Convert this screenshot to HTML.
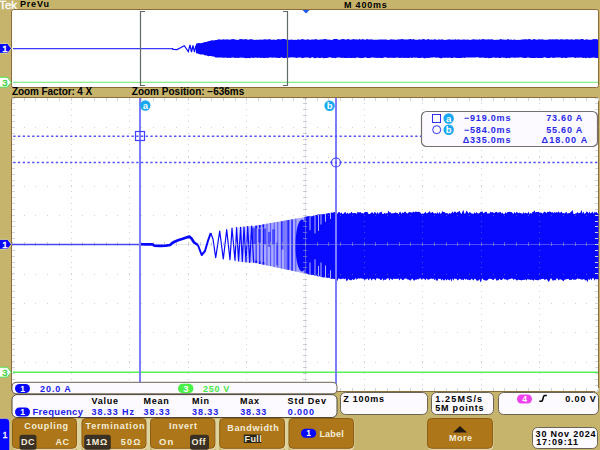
<!DOCTYPE html><html><head><meta charset="utf-8"><style>*{margin:0;padding:0}body{width:600px;height:450px;overflow:hidden;background:#c6b46c}svg{position:absolute;left:0;top:0;display:block}text{font-family:'Liberation Sans', sans-serif}</style></head><body>
<svg width="600" height="450" viewBox="0 0 600 450">
<rect width="600" height="450" fill="#c6b46c"/>
<text x="-0.8" y="8.8" font-size="11.5" fill="#fff" letter-spacing="0" font-weight="normal" text-anchor="start" stroke="#fff" stroke-width="0.35">Tek</text>
<text x="20" y="7.4" font-size="9" fill="#000" letter-spacing="0.8" font-weight="bold" text-anchor="start" >PreVu</text>
<text x="344" y="7.5" font-size="9" fill="#000" letter-spacing="0.8" font-weight="bold" text-anchor="start" >M 400ms</text>
<rect x="11.5" y="9.5" width="587" height="78" rx="2" fill="#fff" stroke="#8c6c3c" stroke-width="1"/>
<line x1="13" y1="82.3" x2="598" y2="82.3" stroke="#68e868" stroke-width="1.1"/>
<line x1="13" y1="48.6" x2="173" y2="48.6" stroke="#3a3af8" stroke-width="1.1"/>
<path d="M172 48.6 L173.5 49.4 L177 49.6 L181 47.5 L184.3 45.7 L188.3 51.6 L190 45 L191.5 52 L193 45.5 L194.5 52 L196 45.5" fill="none" stroke="#0808ff" stroke-width="1.2"/>
<path d="M196 43.8 L197.5 43.2 L199 43 L200.5 43.2 L202 42.9 L203.5 42.6 L205 42 L206.5 42 L208 41.2 L209.5 41 L211 40.4 L212.5 40.2 L214 40.5 L215.5 40.1 L217 39.9 L218.5 39.3 L220 39.4 L221.5 39.8 L223 39.3 L224.5 39.6 L226 39.5 L227.5 39.2 L229 39.7 L230.5 39.4 L232 39.2 L233.5 39 L235 39.5 L236.5 39.8 L238 39.9 L239.5 39.2 L241 39.1 L242.5 39.3 L244 39.4 L245.5 39.1 L247 39.5 L248.5 39.8 L250 39.3 L251.5 39.2 L253 39.6 L254.5 39.9 L256 39.7 L257.5 39.8 L259 39.8 L260.5 39.5 L262 39.8 L263.5 39.4 L265 39.2 L266.5 39.6 L268 39.6 L269.5 39 L271 39.7 L272.5 39.7 L274 39.4 L275.5 39.9 L277 39.6 L278.5 39 L280 39.4 L281.5 39.3 L283 39.1 L284.5 39.1 L286 39.5 L287.5 39.8 L289 39.8 L290.5 39.7 L292 39.6 L293.5 39.9 L295 39.8 L296.5 39.9 L298 39.3 L299.5 39.7 L301 39.6 L302.5 39.1 L304 39.5 L305.5 39.8 L307 39.6 L308.5 39.2 L310 39.9 L311.5 39.4 L313 39.4 L314.5 39.4 L316 39.1 L317.5 39.7 L319 39.7 L320.5 39.4 L322 39.6 L323.5 39.2 L325 39.1 L326.5 39.2 L328 39.7 L329.5 39.6 L331 39.9 L332.5 39.7 L334 39 L335.5 39.1 L337 39 L338.5 39.7 L340 39.7 L341.5 39.3 L343 39.1 L344.5 39.3 L346 39.8 L347.5 39.1 L349 39.2 L350.5 39.7 L352 39.6 L353.5 39 L355 39.5 L356.5 39.2 L358 39.8 L359.5 39.1 L361 39.8 L362.5 39 L364 39.6 L365.5 39.8 L367 39 L368.5 39.4 L370 39.5 L371.5 39.2 L373 39.7 L374.5 39.7 L376 39.7 L377.5 39.8 L379 39.6 L380.5 39.4 L382 39.5 L383.5 39.4 L385 39.4 L386.5 39.5 L388 39.9 L389.5 39.7 L391 39.2 L392.5 39.6 L394 39.4 L395.5 39.8 L397 39.7 L398.5 39.2 L400 39.4 L401.5 39.1 L403 39.3 L404.5 39.4 L406 39.5 L407.5 39.5 L409 39.3 L410.5 39.1 L412 39.4 L413.5 39.1 L415 39.8 L416.5 39.8 L418 39.8 L419.5 39.2 L421 39.8 L422.5 39.3 L424 39.1 L425.5 39.7 L427 39.5 L428.5 39 L430 39.8 L431.5 39.4 L433 39.7 L434.5 39.3 L436 39.4 L437.5 39.9 L439 39.3 L440.5 39.8 L442 39.2 L443.5 39.8 L445 39.9 L446.5 39.7 L448 39.5 L449.5 39.2 L451 39.8 L452.5 39.4 L454 39.8 L455.5 39.3 L457 39.8 L458.5 39.3 L460 39.8 L461.5 39.8 L463 39.5 L464.5 39.4 L466 39.7 L467.5 39.4 L469 39.8 L470.5 39.9 L472 39.6 L473.5 39.2 L475 39.4 L476.5 39.6 L478 39.7 L479.5 39.2 L481 39.7 L482.5 39.1 L484 39.2 L485.5 39.5 L487 39.5 L488.5 39.3 L490 39.6 L491.5 39.3 L493 39.5 L494.5 39.9 L496 39.8 L497.5 39.7 L499 39.8 L500.5 39.1 L502 39.6 L503.5 39.6 L505 39.8 L506.5 39.7 L508 39 L509.5 39.7 L511 39.6 L512.5 39.9 L514 39.5 L515.5 39.7 L517 39.9 L518.5 39.8 L520 39.9 L521.5 39.6 L523 39.4 L524.5 39.2 L526 39.3 L527.5 39.5 L529 39 L530.5 39.2 L532 39.9 L533.5 39.1 L535 39.2 L536.5 39.8 L538 39.4 L539.5 39.2 L541 39.4 L542.5 39.3 L544 39.7 L545.5 39.8 L547 39.8 L548.5 39.4 L550 39.3 L551.5 39.5 L553 39.2 L554.5 39.4 L556 39.3 L557.5 39.2 L559 39.8 L560.5 39.2 L562 39.2 L563.5 39.5 L565 39.5 L566.5 39.2 L568 39.3 L569.5 39.8 L571 39.2 L572.5 39.4 L574 39.8 L575.5 39.3 L577 39.3 L578.5 39.4 L580 39.5 L581.5 39.1 L583 39 L584.5 39.9 L586 39.2 L587.5 39.5 L589 39.7 L590.5 39.7 L592 39.8 L593.5 39 L595 39.2 L596.5 39.1 L598 39.7 L598 58.1 L596.5 57.9 L595 57.8 L593.5 57.4 L592 57.8 L590.5 57.8 L589 58.2 L587.5 57.5 L586 58.2 L584.5 57.7 L583 58.1 L581.5 57.5 L580 57.4 L578.5 57.7 L577 57.6 L575.5 57.9 L574 57.5 L572.5 57.3 L571 57.6 L569.5 57.5 L568 57.4 L566.5 57.9 L565 57.9 L563.5 57.6 L562 58.2 L560.5 57.5 L559 57.5 L557.5 57.5 L556 57.4 L554.5 57.8 L553 58 L551.5 57.3 L550 57.9 L548.5 57.9 L547 58.1 L545.5 57.6 L544 57.3 L542.5 57.9 L541 58.1 L539.5 58 L538 58.1 L536.5 57.8 L535 58 L533.5 57.9 L532 58.1 L530.5 57.9 L529 57.4 L527.5 57.6 L526 58.1 L524.5 57.9 L523 57.8 L521.5 57.5 L520 57.3 L518.5 57.7 L517 57.5 L515.5 57.8 L514 57.8 L512.5 57.6 L511 57.6 L509.5 58.2 L508 57.8 L506.5 58.2 L505 57.7 L503.5 57.7 L502 57.5 L500.5 57.9 L499 58.1 L497.5 57.4 L496 58 L494.5 57.4 L493 57.6 L491.5 57.9 L490 58 L488.5 58.2 L487 57.8 L485.5 58.1 L484 57.7 L482.5 57.4 L481 57.7 L479.5 57.8 L478 57.3 L476.5 57.3 L475 57.5 L473.5 57.6 L472 57.6 L470.5 57.5 L469 57.4 L467.5 57.5 L466 57.4 L464.5 58.1 L463 57.6 L461.5 58.1 L460 58.1 L458.5 58 L457 58.1 L455.5 57.7 L454 57.4 L452.5 57.9 L451 58.1 L449.5 57.5 L448 58.1 L446.5 57.4 L445 58 L443.5 57.5 L442 58.2 L440.5 58.2 L439 57.8 L437.5 57.6 L436 57.7 L434.5 57.3 L433 57.6 L431.5 57.6 L430 57.7 L428.5 58 L427 57.7 L425.5 58.2 L424 58.2 L422.5 57.4 L421 57.9 L419.5 58.1 L418 57.9 L416.5 57.5 L415 57.7 L413.5 57.4 L412 58.1 L410.5 57.5 L409 58.1 L407.5 58.1 L406 57.8 L404.5 57.9 L403 57.8 L401.5 57.7 L400 58 L398.5 57.8 L397 57.5 L395.5 57.8 L394 58 L392.5 57.8 L391 57.8 L389.5 57.7 L388 58 L386.5 57.5 L385 57.3 L383.5 57.8 L382 58.1 L380.5 58.1 L379 57.7 L377.5 58.1 L376 57.7 L374.5 57.8 L373 57.6 L371.5 57.5 L370 58.1 L368.5 58.1 L367 57.9 L365.5 57.3 L364 57.8 L362.5 57.9 L361 58 L359.5 58 L358 57.4 L356.5 57.5 L355 58.2 L353.5 57.7 L352 58 L350.5 58 L349 57.7 L347.5 58 L346 57.9 L344.5 58 L343 57.7 L341.5 58.1 L340 57.5 L338.5 57.5 L337 57.6 L335.5 58.2 L334 57.7 L332.5 57.9 L331 57.6 L329.5 57.3 L328 57.8 L326.5 58 L325 58 L323.5 58.2 L322 57.5 L320.5 58 L319 58 L317.5 57.6 L316 57.9 L314.5 58.2 L313 57.3 L311.5 57.4 L310 58.2 L308.5 57.4 L307 57.5 L305.5 57.4 L304 57.7 L302.5 58.2 L301 57.4 L299.5 57.6 L298 57.4 L296.5 58.1 L295 57.6 L293.5 57.4 L292 57.3 L290.5 57.4 L289 57.4 L287.5 57.9 L286 57.7 L284.5 58 L283 58 L281.5 57.3 L280 57.9 L278.5 57.9 L277 57.8 L275.5 57.7 L274 57.5 L272.5 57.7 L271 57.5 L269.5 57.4 L268 58.1 L266.5 57.7 L265 58.1 L263.5 58.1 L262 57.7 L260.5 58.1 L259 57.5 L257.5 58 L256 57.4 L254.5 57.7 L253 57.9 L251.5 57.6 L250 58.2 L248.5 57.9 L247 57.9 L245.5 58.2 L244 57.7 L242.5 57.8 L241 57.6 L239.5 57.8 L238 57.9 L236.5 57.7 L235 58 L233.5 57.4 L232 57.6 L230.5 58.1 L229 57.8 L227.5 57.9 L226 57.6 L224.5 57.8 L223 57.7 L221.5 57.5 L220 57.4 L218.5 57.6 L217 57.6 L215.5 57.6 L214 56.6 L212.5 56.5 L211 56 L209.5 56 L208 56.2 L206.5 55.3 L205 55.6 L203.5 54.6 L202 54.6 L200.5 54.4 L199 54 L197.5 53.5 L196 53.2Z" fill="#0808ff"/>
<path d="M145 11.5H140.5V85.5H145" fill="none" stroke="#606a6a" stroke-width="1.2"/>
<path d="M283 11.5H287.5V85.5H283" fill="none" stroke="#606a6a" stroke-width="1.2"/>
<path d="M302.5 10H309.5L306 13.5Z" fill="#1a5af0"/>
<path d="M-2 43.4 H7.5 L11.5 48.4 L7.5 53.4 H-2Z" fill="#0606fc" stroke="#e0d890" stroke-width="1"/>
<text x="4.8" y="51.8" font-size="9.5" fill="#fff" letter-spacing="0" font-weight="normal" text-anchor="middle" stroke="#fff" stroke-width="0.4">1</text>
<path d="M-2 77.2 H7.2 L11.2 82.2 L7.2 87.2 H-2Z" fill="#fff" stroke="#50e050" stroke-width="1"/>
<text x="4.8" y="85.6" font-size="9.5" fill="#40d040" letter-spacing="0" font-weight="normal" text-anchor="middle" stroke="#40d040" stroke-width="0.4">3</text>
<text x="12" y="95.2" font-size="10" fill="#000" letter-spacing="-0.1" font-weight="bold" text-anchor="start" >Zoom Factor: 4 X</text>
<text x="131.8" y="95.2" font-size="10" fill="#000" letter-spacing="0" font-weight="bold" text-anchor="start" >Zoom Position: &#8722;636ms</text>
<rect x="11.5" y="97.5" width="587" height="294" rx="2" fill="#fff" stroke="#8c6c3c" stroke-width="1"/>
<defs><linearGradient id="lg" x1="232" x2="252" gradientUnits="userSpaceOnUse"><stop offset="0" stop-color="#fff"/><stop offset="1" stop-color="#a8a8ff"/></linearGradient></defs><path d="M232 227.3 L234 227.2 L236 227.1 L238 226.9 L240 226.8 L242 226.7 L244 226.6 L246 226.5 L248 226.3 L250 226.2 L252 226.1 L254 225.9 L256 225.6 L258 225.2 L260 224.9 L262 224.5 L264 224.2 L266 223.8 L268 223.5 L270 223.1 L272 222.8 L274 222.4 L276 222.1 L278 221.7 L280 221.4 L282 221 L284 220.7 L286 220.3 L288 220 L290 219.6 L292 219.3 L294 218.9 L296 218.6 L298 218.2 L300 217.9 L302 217.5 L304 217.2 L306 216.8 L308 216.5 L310 216.2 L312 215.9 L314 215.5 L316 215.2 L318 214.9 L320 214.6 L322 214.3 L324 213.9 L326 213.6 L328 213.3 L330 213 L332 212.6 L334 212.3 L336 212 L336 279.5 L334 279.1 L332 278.7 L330 278.3 L328 278 L326 277.6 L324 277.2 L322 276.8 L320 276.4 L318 276 L316 275.6 L314 275.2 L312 274.9 L310 274.5 L308 274.1 L306 273.7 L304 273.3 L302 272.9 L300 272.4 L298 272 L296 271.6 L294 271.2 L292 270.8 L290 270.3 L288 269.9 L286 269.5 L284 269.1 L282 268.7 L280 268.2 L278 267.8 L276 267.4 L274 267 L272 266.6 L270 266.1 L268 265.7 L266 265.3 L264 264.9 L262 264.4 L260 264 L258 263.6 L256 263.2 L254 262.8 L252 262.6 L250 262.5 L248 262.4 L246 262.2 L244 262.1 L242 262 L240 261.9 L238 261.8 L236 261.6 L234 261.5 L232 261.4Z" fill="url(#lg)"/>
<path d="M210.7 233 L213 239 L215.7 257.7 L219.7 231 L223.3 259 L226.7 229.7 L230 259.7 L232 228 L235 260.3 L236.6 227.7 L238.6 261 L240.6 227.3 L242.3 261.5 L244 227 L246 262 L247.7 226.5 L249.7 262.5 L251.7 226 L253.7 262.7" fill="none" stroke="#0808ff" stroke-width="1.2" stroke-linejoin="round"/>
<path d="M255.6 225.7h1.1V263.1h-1.1ZM259.2 225h1.1V263.9h-1.1ZM262.8 224.4h1.1V264.6h-1.1Z" fill="#0808ff" opacity="0.8"/>
<path d="M266.4 223.8h1.1V265.4h-1.1ZM270 223.1h1.1V266.1h-1.1ZM273.6 222.5h1.1V266.9h-1.1ZM277.2 221.9h1.1V267.6h-1.1ZM280.8 221.2h1.1V268.4h-1.1ZM284.4 220.6h1.1V269.2h-1.1ZM288 220h1.1V269.9h-1.1ZM291.6 219.4h1.1V270.7h-1.1ZM295.2 218.7h1.1V271.4h-1.1Z" fill="#0808ff" opacity="0.5"/>
<path d="M255.3 225.7h1.8v2.5h-1.8ZM255.3 263.1h1.8v-2.5h-1.8ZM258.9 225h1.8v2.5h-1.8ZM258.9 263.9h1.8v-2.5h-1.8ZM262.5 224.4h1.8v2.5h-1.8ZM262.5 264.6h1.8v-2.5h-1.8Z" fill="#0808ff" opacity="0.8"/>
<rect x="252" y="227.9" width="4" height="16.4" fill="#0808ff" opacity="0.55"/>
<rect x="258" y="229.1" width="3" height="13.4" fill="#0808ff" opacity="0.5"/>
<rect x="263" y="228.4" width="3" height="16.1" fill="#0808ff" opacity="0.6"/>
<rect x="268" y="231.9" width="2.5" height="14.8" fill="#0808ff" opacity="0.55"/>
<rect x="272" y="229.4" width="3" height="15.3" fill="#0808ff" opacity="0.5"/>
<rect x="276" y="242.5" width="2" height="22.7" fill="#0808ff" opacity="0.45"/>
<rect x="281" y="221.2" width="2.5" height="28.3" fill="#0808ff" opacity="0.55"/>
<rect x="286.5" y="220.2" width="3" height="49.4" fill="#0808ff" opacity="0.6"/>
<rect x="291" y="219.5" width="2" height="51.1" fill="#0808ff" opacity="0.5"/>
<ellipse cx="302" cy="245.5" rx="6.5" ry="26" fill="#0808ff"/>
<path d="M304.5 217.1 L305.5 216.4 L306.5 216.7 L307.5 216.2 L308.5 216.3 L309.5 215.8 L310.5 216.5 L311.5 216.4 L312.5 216.2 L313.5 215.5 L314.5 216 L315.5 215.2 L316.5 214.9 L317.5 214.6 L318.5 214.6 L319.5 214.4 L320.5 214.5 L321.5 214.2 L322.5 214.6 L323.5 214.1 L324.5 214.3 L325.5 213.9 L326.5 213.8 L327.5 213.6 L328.5 213 L329.5 213.5 L330.5 212.9 L331.5 212.5 L332.5 213 L333.5 212.6 L334.5 212.3 L335.5 211.7 L336.5 212.1 L337.5 213.9 L338.5 212 L339.5 212.1 L340.5 213.5 L341.5 212.5 L342.5 214.1 L343.5 213.8 L344.5 212.6 L345.5 212.1 L346.5 213.9 L347.5 212.6 L348.5 214.1 L349.5 212.9 L350.5 213.2 L351.5 211.6 L352.5 213.2 L353.5 213.2 L354.5 212.9 L355.5 213.1 L356.5 214.1 L357.5 212.1 L358.5 212.3 L359.5 212.6 L360.5 212.1 L361.5 213.3 L362.5 212.9 L363.5 213.7 L364.5 212.3 L365.5 212.1 L366.5 211.9 L367.5 211.9 L368.5 213.9 L369.5 214 L370.5 213.5 L371.5 212.5 L372.5 212.3 L373.5 214.1 L374.5 211.9 L375.5 212.5 L376.5 213.9 L377.5 211.8 L378.5 214 L379.5 212.4 L380.5 212.2 L381.5 211.5 L382.5 214 L383.5 214.1 L384.5 212.7 L385.5 213.7 L386.5 213.1 L387.5 213.6 L388.5 210.4 L389.5 212.4 L390.5 212.2 L391.5 213.4 L392.5 213.2 L393.5 213.3 L394.5 213 L395.5 212.2 L396.5 213.1 L397.5 212.9 L398.5 214.2 L399.5 212 L400.5 211.8 L401.5 214 L402.5 212.2 L403.5 213.1 L404.5 211.9 L405.5 211.5 L406.5 213.3 L407.5 213.6 L408.5 212.6 L409.5 211.9 L410.5 212.3 L411.5 212.5 L412.5 212.5 L413.5 211.5 L414.5 212.6 L415.5 211.5 L416.5 211.7 L417.5 211.9 L418.5 211.8 L419.5 212 L420.5 212.8 L421.5 213.9 L422.5 213.6 L423.5 213.7 L424.5 212.9 L425.5 211.7 L426.5 213.5 L427.5 213.1 L428.5 212.6 L429.5 210.9 L430.5 212.8 L431.5 212.7 L432.5 211.8 L433.5 212.9 L434.5 213.5 L435.5 212.9 L436.5 213.8 L437.5 212 L438.5 214 L439.5 211.7 L440.5 213.9 L441.5 212.9 L442.5 211.1 L443.5 211.9 L444.5 212 L445.5 213.2 L446.5 213.1 L447.5 213.2 L448.5 214.2 L449.5 212.7 L450.5 213.7 L451.5 213.1 L452.5 211.6 L453.5 212.9 L454.5 211.5 L455.5 211.8 L456.5 213.1 L457.5 211.9 L458.5 211.8 L459.5 210.8 L460.5 213 L461.5 214 L462.5 211.6 L463.5 209.9 L464.5 214 L465.5 212.9 L466.5 210.5 L467.5 211.8 L468.5 213.5 L469.5 212.1 L470.5 212.4 L471.5 213.4 L472.5 213.6 L473.5 214.1 L474.5 212.2 L475.5 213.5 L476.5 212.1 L477.5 213.3 L478.5 213.4 L479.5 213 L480.5 211.7 L481.5 211.8 L482.5 211.6 L483.5 213.4 L484.5 212.5 L485.5 211.7 L486.5 211.8 L487.5 213.8 L488.5 213.2 L489.5 213.5 L490.5 211.6 L491.5 212.5 L492.5 212 L493.5 212.7 L494.5 213 L495.5 211.9 L496.5 211.8 L497.5 212.8 L498.5 212.4 L499.5 212.3 L500.5 211.8 L501.5 213.4 L502.5 212.6 L503.5 213.9 L504.5 213.9 L505.5 212.1 L506.5 213.5 L507.5 211.9 L508.5 212 L509.5 211.8 L510.5 212 L511.5 211.9 L512.5 212.9 L513.5 214.1 L514.5 211.8 L515.5 213.5 L516.5 211.8 L517.5 212.6 L518.5 213.2 L519.5 212.6 L520.5 213 L521.5 213.4 L522.5 213.8 L523.5 212.3 L524.5 213.6 L525.5 212.6 L526.5 213.3 L527.5 213.6 L528.5 211.6 L529.5 214 L530.5 213 L531.5 213.7 L532.5 212.1 L533.5 211.8 L534.5 210.4 L535.5 212.6 L536.5 212.1 L537.5 212.1 L538.5 211.8 L539.5 212.8 L540.5 212.5 L541.5 212.8 L542.5 213.8 L543.5 212.5 L544.5 211.5 L545.5 212.3 L546.5 213.3 L547.5 211.7 L548.5 211.9 L549.5 211.5 L550.5 211.8 L551.5 212.4 L552.5 212 L553.5 213.3 L554.5 212 L555.5 212.7 L556.5 212.1 L557.5 212.8 L558.5 211.2 L559.5 212.8 L560.5 212.5 L561.5 211.4 L562.5 213.3 L563.5 212.9 L564.5 213.4 L565.5 212.5 L566.5 212.1 L567.5 213.7 L568.5 212.9 L569.5 213.3 L570.5 212.3 L571.5 211.6 L572.5 209.8 L573.5 214 L574.5 214 L575.5 213.4 L576.5 213.3 L577.5 212 L578.5 213.3 L579.5 213 L580.5 212.4 L581.5 209.8 L582.5 213.7 L583.5 211.5 L584.5 214.1 L585.5 213.2 L586.5 211.5 L587.5 211.7 L588.5 213.4 L589.5 211.6 L590.5 213.5 L591.5 212.7 L592.5 211.6 L593.5 213.7 L594.5 211.9 L595.5 212.5 L596.5 211.9 L597.5 213.2 L598.5 214.1 L598.5 280.2 L597.5 279.2 L596.5 280.3 L595.5 279.7 L594.5 280.4 L593.5 278.3 L592.5 278.1 L591.5 280.6 L590.5 278.3 L589.5 280.2 L588.5 278.8 L587.5 282.2 L586.5 279.9 L585.5 280.5 L584.5 279.4 L583.5 279.1 L582.5 279.7 L581.5 279.6 L580.5 279.3 L579.5 278.8 L578.5 279.1 L577.5 278.2 L576.5 279.3 L575.5 279.7 L574.5 279.8 L573.5 279.7 L572.5 278.9 L571.5 280.1 L570.5 279.7 L569.5 280.2 L568.5 278.8 L567.5 278.9 L566.5 279.3 L565.5 279.4 L564.5 279.8 L563.5 281.2 L562.5 280.6 L561.5 279.8 L560.5 279.2 L559.5 279.6 L558.5 280.4 L557.5 278.5 L556.5 278.5 L555.5 280.5 L554.5 280 L553.5 280.5 L552.5 280.5 L551.5 278.5 L550.5 278.5 L549.5 280.7 L548.5 282.1 L547.5 280.3 L546.5 279.1 L545.5 279.4 L544.5 280 L543.5 278.8 L542.5 279.1 L541.5 278.9 L540.5 279.8 L539.5 279.6 L538.5 280.2 L537.5 280.3 L536.5 280.1 L535.5 280 L534.5 279.2 L533.5 280.8 L532.5 279.9 L531.5 279.5 L530.5 280 L529.5 279.5 L528.5 279.6 L527.5 279.1 L526.5 280.6 L525.5 279.3 L524.5 280 L523.5 279.8 L522.5 279.9 L521.5 280.5 L520.5 280.1 L519.5 280.1 L518.5 279.4 L517.5 280.2 L516.5 280.5 L515.5 279.3 L514.5 279.1 L513.5 280.1 L512.5 278.5 L511.5 278.5 L510.5 278.9 L509.5 279.3 L508.5 279.3 L507.5 280.4 L506.5 279.8 L505.5 279.3 L504.5 279.5 L503.5 278.2 L502.5 279.2 L501.5 280.2 L500.5 279.8 L499.5 278.7 L498.5 280.3 L497.5 280.3 L496.5 280.7 L495.5 278.6 L494.5 278.7 L493.5 280.2 L492.5 279.8 L491.5 279 L490.5 278.8 L489.5 278.7 L488.5 278.9 L487.5 280.3 L486.5 280.5 L485.5 280.4 L484.5 280.3 L483.5 280.1 L482.5 278.2 L481.5 280.6 L480.5 282.4 L479.5 278.9 L478.5 280.4 L477.5 280.7 L476.5 280.6 L475.5 279 L474.5 278.7 L473.5 280.5 L472.5 279.5 L471.5 278.8 L470.5 280.1 L469.5 280.2 L468.5 279.4 L467.5 280 L466.5 278.9 L465.5 279.8 L464.5 278.5 L463.5 280.2 L462.5 279.5 L461.5 280.1 L460.5 279 L459.5 278.8 L458.5 279.8 L457.5 280.6 L456.5 278.7 L455.5 279.1 L454.5 278.2 L453.5 280.5 L452.5 278.5 L451.5 281.7 L450.5 278.8 L449.5 280.4 L448.5 279.7 L447.5 279.2 L446.5 280.5 L445.5 279.1 L444.5 280.2 L443.5 280.6 L442.5 279 L441.5 280.6 L440.5 278.8 L439.5 279 L438.5 278.5 L437.5 280.8 L436.5 280.8 L435.5 279.1 L434.5 280.2 L433.5 278.2 L432.5 279.3 L431.5 278.6 L430.5 278.7 L429.5 279.3 L428.5 279.7 L427.5 279.6 L426.5 278.2 L425.5 280.5 L424.5 279.1 L423.5 278.6 L422.5 278.7 L421.5 279.8 L420.5 278.2 L419.5 278.4 L418.5 279.4 L417.5 278.9 L416.5 279.8 L415.5 279.6 L414.5 280.5 L413.5 280.5 L412.5 278.6 L411.5 279.2 L410.5 280.7 L409.5 280 L408.5 279.6 L407.5 279.6 L406.5 278.6 L405.5 278.6 L404.5 278.7 L403.5 279.8 L402.5 280.2 L401.5 279.1 L400.5 278.6 L399.5 280.6 L398.5 278.4 L397.5 278.7 L396.5 279 L395.5 278.8 L394.5 279.1 L393.5 278.4 L392.5 279.9 L391.5 279.3 L390.5 278.3 L389.5 280.7 L388.5 278.3 L387.5 278.3 L386.5 279 L385.5 280.1 L384.5 279.4 L383.5 280.7 L382.5 278.2 L381.5 280.1 L380.5 280 L379.5 278.8 L378.5 278.8 L377.5 278.2 L376.5 278.2 L375.5 280.6 L374.5 279.3 L373.5 278.7 L372.5 279 L371.5 280.8 L370.5 278.2 L369.5 279 L368.5 280.5 L367.5 278.2 L366.5 279.2 L365.5 279.2 L364.5 280.7 L363.5 278.7 L362.5 278.7 L361.5 278.6 L360.5 278.2 L359.5 278.8 L358.5 278.2 L357.5 278.8 L356.5 279.8 L355.5 278.1 L354.5 279.7 L353.5 280 L352.5 278.9 L351.5 280.2 L350.5 280.2 L349.5 279.9 L348.5 278.8 L347.5 280.6 L346.5 281.2 L345.5 278.2 L344.5 279.3 L343.5 278.7 L342.5 278.4 L341.5 279 L340.5 279.2 L339.5 278.8 L338.5 278.3 L337.5 280.8 L336.5 280.5 L335.5 279.1 L334.5 279.1 L333.5 278.8 L332.5 278.6 L331.5 278.9 L330.5 278.3 L329.5 277.9 L328.5 277.6 L327.5 278 L326.5 277.6 L325.5 277 L324.5 277.3 L323.5 277.5 L322.5 277.2 L321.5 277.1 L320.5 276.2 L319.5 276.1 L318.5 276.5 L317.5 276.3 L316.5 275.3 L315.5 275.5 L314.5 275.4 L313.5 275 L312.5 274.7 L311.5 275 L310.5 274.2 L309.5 274.6 L308.5 274.5 L307.5 273.8 L306.5 273.6 L305.5 273.6 L304.5 272.9Z" fill="#0808ff"/>
<rect x="309.5" y="216.3" width="1" height="14" fill="#b0b0ff"/>
<rect x="309.5" y="262.4" width="1" height="12" fill="#b0b0ff"/>
<rect x="314.5" y="215.5" width="1" height="18" fill="#b0b0ff"/>
<rect x="314.5" y="259.3" width="1" height="16" fill="#b0b0ff"/>
<rect x="318" y="214.9" width="1" height="16" fill="#b0b0ff"/>
<rect x="318" y="266" width="1" height="10" fill="#b0b0ff"/>
<rect x="320.5" y="214.5" width="1" height="10" fill="#b0b0ff"/>
<rect x="320.5" y="262.5" width="1" height="14" fill="#b0b0ff"/>
<rect x="325" y="213.8" width="1" height="8" fill="#b0b0ff"/>
<rect x="325" y="265.4" width="1" height="12" fill="#b0b0ff"/>
<rect x="330" y="213" width="1" height="6" fill="#b0b0ff"/>
<rect x="330" y="270.3" width="1" height="8" fill="#b0b0ff"/>
<path d="M12 98h1v1h-1zM12 127h1v1h-1zM12 157h1v1h-1zM12 186h1v1h-1zM12 215h1v1h-1zM12 274h1v1h-1zM12 303h1v1h-1zM12 332h1v1h-1zM12 362h1v1h-1zM12 389h1v1h-1zM24 98h1v1h-1zM24 127h1v1h-1zM24 157h1v1h-1zM24 186h1v1h-1zM24 215h1v1h-1zM24 274h1v1h-1zM24 303h1v1h-1zM24 332h1v1h-1zM24 362h1v1h-1zM24 389h1v1h-1zM35 98h1v1h-1zM35 127h1v1h-1zM35 157h1v1h-1zM35 186h1v1h-1zM35 215h1v1h-1zM35 274h1v1h-1zM35 303h1v1h-1zM35 332h1v1h-1zM35 362h1v1h-1zM35 389h1v1h-1zM47 98h1v1h-1zM47 127h1v1h-1zM47 157h1v1h-1zM47 186h1v1h-1zM47 215h1v1h-1zM47 274h1v1h-1zM47 303h1v1h-1zM47 332h1v1h-1zM47 362h1v1h-1zM47 389h1v1h-1zM59 98h1v1h-1zM59 127h1v1h-1zM59 157h1v1h-1zM59 186h1v1h-1zM59 215h1v1h-1zM59 274h1v1h-1zM59 303h1v1h-1zM59 332h1v1h-1zM59 362h1v1h-1zM59 389h1v1h-1zM71 98h1v1h-1zM71 103h1v1h-1zM71 109h1v1h-1zM71 115h1v1h-1zM71 121h1v1h-1zM71 127h1v1h-1zM71 133h1v1h-1zM71 139h1v1h-1zM71 144h1v1h-1zM71 150h1v1h-1zM71 156h1v1h-1zM71 157h1v1h-1zM71 162h1v1h-1zM71 168h1v1h-1zM71 174h1v1h-1zM71 180h1v1h-1zM71 185h1v1h-1zM71 186h1v1h-1zM71 191h1v1h-1zM71 197h1v1h-1zM71 203h1v1h-1zM71 209h1v1h-1zM71 215h1v1h-1zM71 221h1v1h-1zM71 226h1v1h-1zM71 232h1v1h-1zM71 238h1v1h-1zM71 250h1v1h-1zM71 256h1v1h-1zM71 262h1v1h-1zM71 267h1v1h-1zM71 273h1v1h-1zM71 274h1v1h-1zM71 279h1v1h-1zM71 285h1v1h-1zM71 291h1v1h-1zM71 297h1v1h-1zM71 303h1v1h-1zM71 308h1v1h-1zM71 314h1v1h-1zM71 320h1v1h-1zM71 326h1v1h-1zM71 332h1v1h-1zM71 338h1v1h-1zM71 344h1v1h-1zM71 349h1v1h-1zM71 355h1v1h-1zM71 361h1v1h-1zM71 362h1v1h-1zM71 367h1v1h-1zM71 373h1v1h-1zM71 379h1v1h-1zM71 385h1v1h-1zM71 389h1v1h-1zM71 391h1v1h-1zM82 98h1v1h-1zM82 127h1v1h-1zM82 157h1v1h-1zM82 186h1v1h-1zM82 215h1v1h-1zM82 274h1v1h-1zM82 303h1v1h-1zM82 332h1v1h-1zM82 362h1v1h-1zM82 389h1v1h-1zM94 98h1v1h-1zM94 127h1v1h-1zM94 157h1v1h-1zM94 186h1v1h-1zM94 215h1v1h-1zM94 274h1v1h-1zM94 303h1v1h-1zM94 332h1v1h-1zM94 362h1v1h-1zM94 389h1v1h-1zM106 98h1v1h-1zM106 127h1v1h-1zM106 157h1v1h-1zM106 186h1v1h-1zM106 215h1v1h-1zM106 274h1v1h-1zM106 303h1v1h-1zM106 332h1v1h-1zM106 362h1v1h-1zM106 389h1v1h-1zM117 98h1v1h-1zM117 127h1v1h-1zM117 157h1v1h-1zM117 186h1v1h-1zM117 215h1v1h-1zM117 274h1v1h-1zM117 303h1v1h-1zM117 332h1v1h-1zM117 362h1v1h-1zM117 389h1v1h-1zM129 98h1v1h-1zM129 103h1v1h-1zM129 109h1v1h-1zM129 115h1v1h-1zM129 121h1v1h-1zM129 127h1v1h-1zM129 133h1v1h-1zM129 139h1v1h-1zM129 144h1v1h-1zM129 150h1v1h-1zM129 156h1v1h-1zM129 157h1v1h-1zM129 162h1v1h-1zM129 168h1v1h-1zM129 174h1v1h-1zM129 180h1v1h-1zM129 185h1v1h-1zM129 186h1v1h-1zM129 191h1v1h-1zM129 197h1v1h-1zM129 203h1v1h-1zM129 209h1v1h-1zM129 215h1v1h-1zM129 221h1v1h-1zM129 226h1v1h-1zM129 232h1v1h-1zM129 238h1v1h-1zM129 250h1v1h-1zM129 256h1v1h-1zM129 262h1v1h-1zM129 267h1v1h-1zM129 273h1v1h-1zM129 274h1v1h-1zM129 279h1v1h-1zM129 285h1v1h-1zM129 291h1v1h-1zM129 297h1v1h-1zM129 303h1v1h-1zM129 308h1v1h-1zM129 314h1v1h-1zM129 320h1v1h-1zM129 326h1v1h-1zM129 332h1v1h-1zM129 338h1v1h-1zM129 344h1v1h-1zM129 349h1v1h-1zM129 355h1v1h-1zM129 361h1v1h-1zM129 362h1v1h-1zM129 367h1v1h-1zM129 373h1v1h-1zM129 379h1v1h-1zM129 385h1v1h-1zM129 389h1v1h-1zM129 391h1v1h-1zM141 98h1v1h-1zM141 127h1v1h-1zM141 157h1v1h-1zM141 186h1v1h-1zM141 215h1v1h-1zM141 274h1v1h-1zM141 303h1v1h-1zM141 332h1v1h-1zM141 362h1v1h-1zM141 389h1v1h-1zM153 98h1v1h-1zM153 127h1v1h-1zM153 157h1v1h-1zM153 186h1v1h-1zM153 215h1v1h-1zM153 274h1v1h-1zM153 303h1v1h-1zM153 332h1v1h-1zM153 362h1v1h-1zM153 389h1v1h-1zM164 98h1v1h-1zM164 127h1v1h-1zM164 157h1v1h-1zM164 186h1v1h-1zM164 215h1v1h-1zM164 274h1v1h-1zM164 303h1v1h-1zM164 332h1v1h-1zM164 362h1v1h-1zM164 389h1v1h-1zM176 98h1v1h-1zM176 127h1v1h-1zM176 157h1v1h-1zM176 186h1v1h-1zM176 215h1v1h-1zM176 274h1v1h-1zM176 303h1v1h-1zM176 332h1v1h-1zM176 362h1v1h-1zM176 389h1v1h-1zM188 98h1v1h-1zM188 103h1v1h-1zM188 109h1v1h-1zM188 115h1v1h-1zM188 121h1v1h-1zM188 127h1v1h-1zM188 133h1v1h-1zM188 139h1v1h-1zM188 144h1v1h-1zM188 150h1v1h-1zM188 156h1v1h-1zM188 157h1v1h-1zM188 162h1v1h-1zM188 168h1v1h-1zM188 174h1v1h-1zM188 180h1v1h-1zM188 185h1v1h-1zM188 186h1v1h-1zM188 191h1v1h-1zM188 197h1v1h-1zM188 203h1v1h-1zM188 209h1v1h-1zM188 215h1v1h-1zM188 221h1v1h-1zM188 226h1v1h-1zM188 232h1v1h-1zM188 238h1v1h-1zM188 250h1v1h-1zM188 256h1v1h-1zM188 262h1v1h-1zM188 267h1v1h-1zM188 273h1v1h-1zM188 274h1v1h-1zM188 279h1v1h-1zM188 285h1v1h-1zM188 291h1v1h-1zM188 297h1v1h-1zM188 303h1v1h-1zM188 308h1v1h-1zM188 314h1v1h-1zM188 320h1v1h-1zM188 326h1v1h-1zM188 332h1v1h-1zM188 338h1v1h-1zM188 344h1v1h-1zM188 349h1v1h-1zM188 355h1v1h-1zM188 361h1v1h-1zM188 362h1v1h-1zM188 367h1v1h-1zM188 373h1v1h-1zM188 379h1v1h-1zM188 385h1v1h-1zM188 389h1v1h-1zM188 391h1v1h-1zM200 98h1v1h-1zM200 127h1v1h-1zM200 157h1v1h-1zM200 186h1v1h-1zM200 215h1v1h-1zM200 274h1v1h-1zM200 303h1v1h-1zM200 332h1v1h-1zM200 362h1v1h-1zM200 389h1v1h-1zM211 98h1v1h-1zM211 127h1v1h-1zM211 157h1v1h-1zM211 186h1v1h-1zM211 215h1v1h-1zM211 274h1v1h-1zM211 303h1v1h-1zM211 332h1v1h-1zM211 362h1v1h-1zM211 389h1v1h-1zM223 98h1v1h-1zM223 127h1v1h-1zM223 157h1v1h-1zM223 186h1v1h-1zM223 215h1v1h-1zM223 274h1v1h-1zM223 303h1v1h-1zM223 332h1v1h-1zM223 362h1v1h-1zM223 389h1v1h-1zM235 98h1v1h-1zM235 127h1v1h-1zM235 157h1v1h-1zM235 186h1v1h-1zM235 215h1v1h-1zM235 274h1v1h-1zM235 303h1v1h-1zM235 332h1v1h-1zM235 362h1v1h-1zM235 389h1v1h-1zM246 98h1v1h-1zM246 103h1v1h-1zM246 109h1v1h-1zM246 115h1v1h-1zM246 121h1v1h-1zM246 127h1v1h-1zM246 133h1v1h-1zM246 139h1v1h-1zM246 144h1v1h-1zM246 150h1v1h-1zM246 156h1v1h-1zM246 157h1v1h-1zM246 162h1v1h-1zM246 168h1v1h-1zM246 174h1v1h-1zM246 180h1v1h-1zM246 185h1v1h-1zM246 186h1v1h-1zM246 191h1v1h-1zM246 197h1v1h-1zM246 203h1v1h-1zM246 209h1v1h-1zM246 215h1v1h-1zM246 221h1v1h-1zM246 226h1v1h-1zM246 232h1v1h-1zM246 238h1v1h-1zM246 250h1v1h-1zM246 256h1v1h-1zM246 262h1v1h-1zM246 267h1v1h-1zM246 273h1v1h-1zM246 274h1v1h-1zM246 279h1v1h-1zM246 285h1v1h-1zM246 291h1v1h-1zM246 297h1v1h-1zM246 303h1v1h-1zM246 308h1v1h-1zM246 314h1v1h-1zM246 320h1v1h-1zM246 326h1v1h-1zM246 332h1v1h-1zM246 338h1v1h-1zM246 344h1v1h-1zM246 349h1v1h-1zM246 355h1v1h-1zM246 361h1v1h-1zM246 362h1v1h-1zM246 367h1v1h-1zM246 373h1v1h-1zM246 379h1v1h-1zM246 385h1v1h-1zM246 389h1v1h-1zM246 391h1v1h-1zM258 98h1v1h-1zM258 127h1v1h-1zM258 157h1v1h-1zM258 186h1v1h-1zM258 215h1v1h-1zM258 274h1v1h-1zM258 303h1v1h-1zM258 332h1v1h-1zM258 362h1v1h-1zM258 389h1v1h-1zM270 98h1v1h-1zM270 127h1v1h-1zM270 157h1v1h-1zM270 186h1v1h-1zM270 215h1v1h-1zM270 274h1v1h-1zM270 303h1v1h-1zM270 332h1v1h-1zM270 362h1v1h-1zM270 389h1v1h-1zM282 98h1v1h-1zM282 127h1v1h-1zM282 157h1v1h-1zM282 186h1v1h-1zM282 215h1v1h-1zM282 274h1v1h-1zM282 303h1v1h-1zM282 332h1v1h-1zM282 362h1v1h-1zM282 389h1v1h-1zM293 98h1v1h-1zM293 127h1v1h-1zM293 157h1v1h-1zM293 186h1v1h-1zM293 215h1v1h-1zM293 274h1v1h-1zM293 303h1v1h-1zM293 332h1v1h-1zM293 362h1v1h-1zM293 389h1v1h-1zM317 98h1v1h-1zM317 127h1v1h-1zM317 157h1v1h-1zM317 186h1v1h-1zM317 215h1v1h-1zM317 274h1v1h-1zM317 303h1v1h-1zM317 332h1v1h-1zM317 362h1v1h-1zM317 389h1v1h-1zM328 98h1v1h-1zM328 127h1v1h-1zM328 157h1v1h-1zM328 186h1v1h-1zM328 215h1v1h-1zM328 274h1v1h-1zM328 303h1v1h-1zM328 332h1v1h-1zM328 362h1v1h-1zM328 389h1v1h-1zM340 98h1v1h-1zM340 127h1v1h-1zM340 157h1v1h-1zM340 186h1v1h-1zM340 215h1v1h-1zM340 274h1v1h-1zM340 303h1v1h-1zM340 332h1v1h-1zM340 362h1v1h-1zM340 389h1v1h-1zM352 98h1v1h-1zM352 127h1v1h-1zM352 157h1v1h-1zM352 186h1v1h-1zM352 215h1v1h-1zM352 274h1v1h-1zM352 303h1v1h-1zM352 332h1v1h-1zM352 362h1v1h-1zM352 389h1v1h-1zM364 98h1v1h-1zM364 103h1v1h-1zM364 109h1v1h-1zM364 115h1v1h-1zM364 121h1v1h-1zM364 127h1v1h-1zM364 133h1v1h-1zM364 139h1v1h-1zM364 144h1v1h-1zM364 150h1v1h-1zM364 156h1v1h-1zM364 157h1v1h-1zM364 162h1v1h-1zM364 168h1v1h-1zM364 174h1v1h-1zM364 180h1v1h-1zM364 185h1v1h-1zM364 186h1v1h-1zM364 191h1v1h-1zM364 197h1v1h-1zM364 203h1v1h-1zM364 209h1v1h-1zM364 215h1v1h-1zM364 221h1v1h-1zM364 226h1v1h-1zM364 232h1v1h-1zM364 238h1v1h-1zM364 250h1v1h-1zM364 256h1v1h-1zM364 262h1v1h-1zM364 267h1v1h-1zM364 273h1v1h-1zM364 274h1v1h-1zM364 279h1v1h-1zM364 285h1v1h-1zM364 291h1v1h-1zM364 297h1v1h-1zM364 303h1v1h-1zM364 308h1v1h-1zM364 314h1v1h-1zM364 320h1v1h-1zM364 326h1v1h-1zM364 332h1v1h-1zM364 338h1v1h-1zM364 344h1v1h-1zM364 349h1v1h-1zM364 355h1v1h-1zM364 361h1v1h-1zM364 362h1v1h-1zM364 367h1v1h-1zM364 373h1v1h-1zM364 379h1v1h-1zM364 385h1v1h-1zM364 389h1v1h-1zM364 391h1v1h-1zM375 98h1v1h-1zM375 127h1v1h-1zM375 157h1v1h-1zM375 186h1v1h-1zM375 215h1v1h-1zM375 274h1v1h-1zM375 303h1v1h-1zM375 332h1v1h-1zM375 362h1v1h-1zM375 389h1v1h-1zM387 98h1v1h-1zM387 127h1v1h-1zM387 157h1v1h-1zM387 186h1v1h-1zM387 215h1v1h-1zM387 274h1v1h-1zM387 303h1v1h-1zM387 332h1v1h-1zM387 362h1v1h-1zM387 389h1v1h-1zM399 98h1v1h-1zM399 127h1v1h-1zM399 157h1v1h-1zM399 186h1v1h-1zM399 215h1v1h-1zM399 274h1v1h-1zM399 303h1v1h-1zM399 332h1v1h-1zM399 362h1v1h-1zM399 389h1v1h-1zM410 98h1v1h-1zM410 127h1v1h-1zM410 157h1v1h-1zM410 186h1v1h-1zM410 215h1v1h-1zM410 274h1v1h-1zM410 303h1v1h-1zM410 332h1v1h-1zM410 362h1v1h-1zM410 389h1v1h-1zM422 98h1v1h-1zM422 103h1v1h-1zM422 109h1v1h-1zM422 115h1v1h-1zM422 121h1v1h-1zM422 127h1v1h-1zM422 133h1v1h-1zM422 139h1v1h-1zM422 144h1v1h-1zM422 150h1v1h-1zM422 156h1v1h-1zM422 157h1v1h-1zM422 162h1v1h-1zM422 168h1v1h-1zM422 174h1v1h-1zM422 180h1v1h-1zM422 185h1v1h-1zM422 186h1v1h-1zM422 191h1v1h-1zM422 197h1v1h-1zM422 203h1v1h-1zM422 209h1v1h-1zM422 215h1v1h-1zM422 221h1v1h-1zM422 226h1v1h-1zM422 232h1v1h-1zM422 238h1v1h-1zM422 250h1v1h-1zM422 256h1v1h-1zM422 262h1v1h-1zM422 267h1v1h-1zM422 273h1v1h-1zM422 274h1v1h-1zM422 279h1v1h-1zM422 285h1v1h-1zM422 291h1v1h-1zM422 297h1v1h-1zM422 303h1v1h-1zM422 308h1v1h-1zM422 314h1v1h-1zM422 320h1v1h-1zM422 326h1v1h-1zM422 332h1v1h-1zM422 338h1v1h-1zM422 344h1v1h-1zM422 349h1v1h-1zM422 355h1v1h-1zM422 361h1v1h-1zM422 362h1v1h-1zM422 367h1v1h-1zM422 373h1v1h-1zM422 379h1v1h-1zM422 385h1v1h-1zM422 389h1v1h-1zM422 391h1v1h-1zM434 98h1v1h-1zM434 127h1v1h-1zM434 157h1v1h-1zM434 186h1v1h-1zM434 215h1v1h-1zM434 274h1v1h-1zM434 303h1v1h-1zM434 332h1v1h-1zM434 362h1v1h-1zM434 389h1v1h-1zM446 98h1v1h-1zM446 127h1v1h-1zM446 157h1v1h-1zM446 186h1v1h-1zM446 215h1v1h-1zM446 274h1v1h-1zM446 303h1v1h-1zM446 332h1v1h-1zM446 362h1v1h-1zM446 389h1v1h-1zM457 98h1v1h-1zM457 127h1v1h-1zM457 157h1v1h-1zM457 186h1v1h-1zM457 215h1v1h-1zM457 274h1v1h-1zM457 303h1v1h-1zM457 332h1v1h-1zM457 362h1v1h-1zM457 389h1v1h-1zM469 98h1v1h-1zM469 127h1v1h-1zM469 157h1v1h-1zM469 186h1v1h-1zM469 215h1v1h-1zM469 274h1v1h-1zM469 303h1v1h-1zM469 332h1v1h-1zM469 362h1v1h-1zM469 389h1v1h-1zM481 98h1v1h-1zM481 103h1v1h-1zM481 109h1v1h-1zM481 115h1v1h-1zM481 121h1v1h-1zM481 127h1v1h-1zM481 133h1v1h-1zM481 139h1v1h-1zM481 144h1v1h-1zM481 150h1v1h-1zM481 156h1v1h-1zM481 157h1v1h-1zM481 162h1v1h-1zM481 168h1v1h-1zM481 174h1v1h-1zM481 180h1v1h-1zM481 185h1v1h-1zM481 186h1v1h-1zM481 191h1v1h-1zM481 197h1v1h-1zM481 203h1v1h-1zM481 209h1v1h-1zM481 215h1v1h-1zM481 221h1v1h-1zM481 226h1v1h-1zM481 232h1v1h-1zM481 238h1v1h-1zM481 250h1v1h-1zM481 256h1v1h-1zM481 262h1v1h-1zM481 267h1v1h-1zM481 273h1v1h-1zM481 274h1v1h-1zM481 279h1v1h-1zM481 285h1v1h-1zM481 291h1v1h-1zM481 297h1v1h-1zM481 303h1v1h-1zM481 308h1v1h-1zM481 314h1v1h-1zM481 320h1v1h-1zM481 326h1v1h-1zM481 332h1v1h-1zM481 338h1v1h-1zM481 344h1v1h-1zM481 349h1v1h-1zM481 355h1v1h-1zM481 361h1v1h-1zM481 362h1v1h-1zM481 367h1v1h-1zM481 373h1v1h-1zM481 379h1v1h-1zM481 385h1v1h-1zM481 389h1v1h-1zM481 391h1v1h-1zM493 98h1v1h-1zM493 127h1v1h-1zM493 157h1v1h-1zM493 186h1v1h-1zM493 215h1v1h-1zM493 274h1v1h-1zM493 303h1v1h-1zM493 332h1v1h-1zM493 362h1v1h-1zM493 389h1v1h-1zM504 98h1v1h-1zM504 127h1v1h-1zM504 157h1v1h-1zM504 186h1v1h-1zM504 215h1v1h-1zM504 274h1v1h-1zM504 303h1v1h-1zM504 332h1v1h-1zM504 362h1v1h-1zM504 389h1v1h-1zM516 98h1v1h-1zM516 127h1v1h-1zM516 157h1v1h-1zM516 186h1v1h-1zM516 215h1v1h-1zM516 274h1v1h-1zM516 303h1v1h-1zM516 332h1v1h-1zM516 362h1v1h-1zM516 389h1v1h-1zM528 98h1v1h-1zM528 127h1v1h-1zM528 157h1v1h-1zM528 186h1v1h-1zM528 215h1v1h-1zM528 274h1v1h-1zM528 303h1v1h-1zM528 332h1v1h-1zM528 362h1v1h-1zM528 389h1v1h-1zM539 98h1v1h-1zM539 103h1v1h-1zM539 109h1v1h-1zM539 115h1v1h-1zM539 121h1v1h-1zM539 127h1v1h-1zM539 133h1v1h-1zM539 139h1v1h-1zM539 144h1v1h-1zM539 150h1v1h-1zM539 156h1v1h-1zM539 157h1v1h-1zM539 162h1v1h-1zM539 168h1v1h-1zM539 174h1v1h-1zM539 180h1v1h-1zM539 185h1v1h-1zM539 186h1v1h-1zM539 191h1v1h-1zM539 197h1v1h-1zM539 203h1v1h-1zM539 209h1v1h-1zM539 215h1v1h-1zM539 221h1v1h-1zM539 226h1v1h-1zM539 232h1v1h-1zM539 238h1v1h-1zM539 250h1v1h-1zM539 256h1v1h-1zM539 262h1v1h-1zM539 267h1v1h-1zM539 273h1v1h-1zM539 274h1v1h-1zM539 279h1v1h-1zM539 285h1v1h-1zM539 291h1v1h-1zM539 297h1v1h-1zM539 303h1v1h-1zM539 308h1v1h-1zM539 314h1v1h-1zM539 320h1v1h-1zM539 326h1v1h-1zM539 332h1v1h-1zM539 338h1v1h-1zM539 344h1v1h-1zM539 349h1v1h-1zM539 355h1v1h-1zM539 361h1v1h-1zM539 362h1v1h-1zM539 367h1v1h-1zM539 373h1v1h-1zM539 379h1v1h-1zM539 385h1v1h-1zM539 389h1v1h-1zM539 391h1v1h-1zM551 98h1v1h-1zM551 127h1v1h-1zM551 157h1v1h-1zM551 186h1v1h-1zM551 215h1v1h-1zM551 274h1v1h-1zM551 303h1v1h-1zM551 332h1v1h-1zM551 362h1v1h-1zM551 389h1v1h-1zM563 98h1v1h-1zM563 127h1v1h-1zM563 157h1v1h-1zM563 186h1v1h-1zM563 215h1v1h-1zM563 274h1v1h-1zM563 303h1v1h-1zM563 332h1v1h-1zM563 362h1v1h-1zM563 389h1v1h-1zM575 98h1v1h-1zM575 127h1v1h-1zM575 157h1v1h-1zM575 186h1v1h-1zM575 215h1v1h-1zM575 274h1v1h-1zM575 303h1v1h-1zM575 332h1v1h-1zM575 362h1v1h-1zM575 389h1v1h-1zM586 98h1v1h-1zM586 127h1v1h-1zM586 157h1v1h-1zM586 186h1v1h-1zM586 215h1v1h-1zM586 274h1v1h-1zM586 303h1v1h-1zM586 332h1v1h-1zM586 362h1v1h-1zM586 389h1v1h-1zM598 98h1v1h-1zM598 127h1v1h-1zM598 157h1v1h-1zM598 186h1v1h-1zM598 215h1v1h-1zM598 274h1v1h-1zM598 303h1v1h-1zM598 332h1v1h-1zM598 362h1v1h-1zM598 389h1v1h-1z" fill="#9898a8" opacity="0.45"/>
<path d="M12 98h3v1h-3zM595 98h3v1h-3zM12 103h3v1h-3zM595 103h3v1h-3zM12 109h3v1h-3zM595 109h3v1h-3zM12 115h3v1h-3zM595 115h3v1h-3zM12 121h3v1h-3zM595 121h3v1h-3zM12 127h3v1h-3zM595 127h3v1h-3zM12 133h3v1h-3zM595 133h3v1h-3zM12 139h3v1h-3zM595 139h3v1h-3zM12 144h3v1h-3zM595 144h3v1h-3zM12 150h3v1h-3zM595 150h3v1h-3zM12 156h3v1h-3zM595 156h3v1h-3zM12 162h3v1h-3zM595 162h3v1h-3zM12 168h3v1h-3zM595 168h3v1h-3zM12 174h3v1h-3zM595 174h3v1h-3zM12 180h3v1h-3zM595 180h3v1h-3zM12 185h3v1h-3zM595 185h3v1h-3zM12 191h3v1h-3zM595 191h3v1h-3zM12 197h3v1h-3zM595 197h3v1h-3zM12 203h3v1h-3zM595 203h3v1h-3zM12 209h3v1h-3zM595 209h3v1h-3zM12 215h3v1h-3zM595 215h3v1h-3zM12 221h3v1h-3zM595 221h3v1h-3zM12 226h3v1h-3zM595 226h3v1h-3zM12 232h3v1h-3zM595 232h3v1h-3zM12 238h3v1h-3zM595 238h3v1h-3zM12 244h3v1h-3zM595 244h3v1h-3zM12 250h3v1h-3zM595 250h3v1h-3zM12 256h3v1h-3zM595 256h3v1h-3zM12 262h3v1h-3zM595 262h3v1h-3zM12 267h3v1h-3zM595 267h3v1h-3zM12 273h3v1h-3zM595 273h3v1h-3zM12 279h3v1h-3zM595 279h3v1h-3zM12 285h3v1h-3zM595 285h3v1h-3zM12 291h3v1h-3zM595 291h3v1h-3zM12 297h3v1h-3zM595 297h3v1h-3zM12 303h3v1h-3zM595 303h3v1h-3zM12 308h3v1h-3zM595 308h3v1h-3zM12 314h3v1h-3zM595 314h3v1h-3zM12 320h3v1h-3zM595 320h3v1h-3zM12 326h3v1h-3zM595 326h3v1h-3zM12 332h3v1h-3zM595 332h3v1h-3zM12 338h3v1h-3zM595 338h3v1h-3zM12 344h3v1h-3zM595 344h3v1h-3zM12 349h3v1h-3zM595 349h3v1h-3zM12 355h3v1h-3zM595 355h3v1h-3zM12 361h3v1h-3zM595 361h3v1h-3zM12 367h3v1h-3zM595 367h3v1h-3zM12 373h3v1h-3zM595 373h3v1h-3zM12 379h3v1h-3zM595 379h3v1h-3zM12 385h3v1h-3zM595 385h3v1h-3zM12 391h3v1h-3zM595 391h3v1h-3zM12 98h1v3h-1zM12 388h1v3h-1zM24 98h1v3h-1zM24 388h1v3h-1zM35 98h1v3h-1zM35 388h1v3h-1zM47 98h1v3h-1zM47 388h1v3h-1zM59 98h1v3h-1zM59 388h1v3h-1zM71 98h1v3h-1zM71 388h1v3h-1zM82 98h1v3h-1zM82 388h1v3h-1zM94 98h1v3h-1zM94 388h1v3h-1zM106 98h1v3h-1zM106 388h1v3h-1zM117 98h1v3h-1zM117 388h1v3h-1zM129 98h1v3h-1zM129 388h1v3h-1zM141 98h1v3h-1zM141 388h1v3h-1zM153 98h1v3h-1zM153 388h1v3h-1zM164 98h1v3h-1zM164 388h1v3h-1zM176 98h1v3h-1zM176 388h1v3h-1zM188 98h1v3h-1zM188 388h1v3h-1zM200 98h1v3h-1zM200 388h1v3h-1zM211 98h1v3h-1zM211 388h1v3h-1zM223 98h1v3h-1zM223 388h1v3h-1zM235 98h1v3h-1zM235 388h1v3h-1zM246 98h1v3h-1zM246 388h1v3h-1zM258 98h1v3h-1zM258 388h1v3h-1zM270 98h1v3h-1zM270 388h1v3h-1zM282 98h1v3h-1zM282 388h1v3h-1zM293 98h1v3h-1zM293 388h1v3h-1zM305 98h1v3h-1zM305 388h1v3h-1zM317 98h1v3h-1zM317 388h1v3h-1zM328 98h1v3h-1zM328 388h1v3h-1zM340 98h1v3h-1zM340 388h1v3h-1zM352 98h1v3h-1zM352 388h1v3h-1zM364 98h1v3h-1zM364 388h1v3h-1zM375 98h1v3h-1zM375 388h1v3h-1zM387 98h1v3h-1zM387 388h1v3h-1zM399 98h1v3h-1zM399 388h1v3h-1zM410 98h1v3h-1zM410 388h1v3h-1zM422 98h1v3h-1zM422 388h1v3h-1zM434 98h1v3h-1zM434 388h1v3h-1zM446 98h1v3h-1zM446 388h1v3h-1zM457 98h1v3h-1zM457 388h1v3h-1zM469 98h1v3h-1zM469 388h1v3h-1zM481 98h1v3h-1zM481 388h1v3h-1zM493 98h1v3h-1zM493 388h1v3h-1zM504 98h1v3h-1zM504 388h1v3h-1zM516 98h1v3h-1zM516 388h1v3h-1zM528 98h1v3h-1zM528 388h1v3h-1zM539 98h1v3h-1zM539 388h1v3h-1zM551 98h1v3h-1zM551 388h1v3h-1zM563 98h1v3h-1zM563 388h1v3h-1zM575 98h1v3h-1zM575 388h1v3h-1zM586 98h1v3h-1zM586 388h1v3h-1zM598 98h1v3h-1zM598 388h1v3h-1z" fill="#d4d4dc"/>
<rect x="305" y="98" width="1" height="293" fill="#c0c4d8" opacity="0.38"/>
<rect x="12" y="244" width="586" height="1" fill="#c0c4d8" opacity="0.38"/>
<path d="M303 98h4v1h-4zM303 103h4v1h-4zM303 109h4v1h-4zM303 115h4v1h-4zM303 121h4v1h-4zM303 127h4v1h-4zM303 133h4v1h-4zM303 139h4v1h-4zM303 144h4v1h-4zM303 150h4v1h-4zM303 156h4v1h-4zM303 162h4v1h-4zM303 168h4v1h-4zM303 174h4v1h-4zM303 180h4v1h-4zM303 185h4v1h-4zM303 191h4v1h-4zM303 197h4v1h-4zM303 203h4v1h-4zM303 209h4v1h-4zM303 215h4v1h-4zM303 221h4v1h-4zM303 226h4v1h-4zM303 232h4v1h-4zM303 238h4v1h-4zM303 244h4v1h-4zM303 250h4v1h-4zM303 256h4v1h-4zM303 262h4v1h-4zM303 267h4v1h-4zM303 273h4v1h-4zM303 279h4v1h-4zM303 285h4v1h-4zM303 291h4v1h-4zM303 297h4v1h-4zM303 303h4v1h-4zM303 308h4v1h-4zM303 314h4v1h-4zM303 320h4v1h-4zM303 326h4v1h-4zM303 332h4v1h-4zM303 338h4v1h-4zM303 344h4v1h-4zM303 349h4v1h-4zM303 355h4v1h-4zM303 361h4v1h-4zM303 367h4v1h-4zM303 373h4v1h-4zM303 379h4v1h-4zM303 385h4v1h-4zM303 391h4v1h-4zM12 242h1v4h-1zM24 242h1v4h-1zM35 242h1v4h-1zM47 242h1v4h-1zM59 242h1v4h-1zM71 242h1v4h-1zM82 242h1v4h-1zM94 242h1v4h-1zM106 242h1v4h-1zM117 242h1v4h-1zM129 242h1v4h-1zM141 242h1v4h-1zM153 242h1v4h-1zM164 242h1v4h-1zM176 242h1v4h-1zM188 242h1v4h-1zM200 242h1v4h-1zM211 242h1v4h-1zM223 242h1v4h-1zM235 242h1v4h-1zM246 242h1v4h-1zM258 242h1v4h-1zM270 242h1v4h-1zM282 242h1v4h-1zM293 242h1v4h-1zM305 242h1v4h-1zM317 242h1v4h-1zM328 242h1v4h-1zM340 242h1v4h-1zM352 242h1v4h-1zM364 242h1v4h-1zM375 242h1v4h-1zM387 242h1v4h-1zM399 242h1v4h-1zM410 242h1v4h-1zM422 242h1v4h-1zM434 242h1v4h-1zM446 242h1v4h-1zM457 242h1v4h-1zM469 242h1v4h-1zM481 242h1v4h-1zM493 242h1v4h-1zM504 242h1v4h-1zM516 242h1v4h-1zM528 242h1v4h-1zM539 242h1v4h-1zM551 242h1v4h-1zM563 242h1v4h-1zM575 242h1v4h-1zM586 242h1v4h-1zM598 242h1v4h-1z" fill="#a0a4b8" opacity="0.55"/>
<line x1="12" y1="244.5" x2="140" y2="244.5" stroke="#4848f0" stroke-width="1.3"/>
<path d="M139.7 244.2 L146 244.4 L152.5 244.4 L154.5 245.8 L160 245.9 L166 245.6 L170.1 245 L172.3 243 L175 241.5 L178.7 240 L182 239 L185 238 L189.3 236.5 L191.5 238.5 L194.1 242.5 L197.9 245" fill="none" stroke="#0808ff" stroke-width="2.6" stroke-linejoin="round"/>
<path d="M197.9 245 L201.7 255 L205 251 L207.7 241.7 L210.7 233" fill="none" stroke="#0808ff" stroke-width="2" stroke-linejoin="round"/>
<line x1="13" y1="372.3" x2="598" y2="372.3" stroke="#58f058" stroke-width="1.5"/>
<line x1="140" y1="98" x2="140" y2="391" stroke="#7c7cff" stroke-width="2"/>
<line x1="336" y1="98" x2="336" y2="391" stroke="#7c7cff" stroke-width="2"/>
<line x1="13.25" y1="136.2" x2="598" y2="136.2" stroke="#5050ff" stroke-width="1.4" stroke-dasharray="2.3 2.429"/>
<line x1="13.25" y1="162.5" x2="598" y2="162.5" stroke="#5050ff" stroke-width="1.4" stroke-dasharray="2.3 2.429"/>
<rect x="135.5" y="131.5" width="9" height="9" fill="none" stroke="#4040ff" stroke-width="1.2"/>
<circle cx="336" cy="162.5" r="4.5" fill="none" stroke="#4040ff" stroke-width="1.2"/>
<circle cx="145.3" cy="105.5" r="5.2" fill="#18a8f0"/>
<text x="145.3" y="108.7" font-size="9.5" fill="#fff" letter-spacing="0" font-weight="bold" text-anchor="middle" >a</text>
<circle cx="329.6" cy="105.7" r="5.2" fill="#18a8f0"/>
<text x="329.6" y="108.9" font-size="9.5" fill="#fff" letter-spacing="0" font-weight="bold" text-anchor="middle" >b</text>
<path d="M-2 239.3 H7.5 L11.5 244.3 L7.5 249.3 H-2Z" fill="#0606fc" stroke="#e0d890" stroke-width="1"/>
<text x="4.8" y="247.7" font-size="9.5" fill="#fff" letter-spacing="0" font-weight="normal" text-anchor="middle" stroke="#fff" stroke-width="0.4">1</text>
<path d="M-2 367.2 H7.2 L11.2 372.2 L7.2 377.2 H-2Z" fill="#fff" stroke="#50e050" stroke-width="1"/>
<text x="4.8" y="375.6" font-size="9.5" fill="#40d040" letter-spacing="0" font-weight="normal" text-anchor="middle" stroke="#40d040" stroke-width="0.4">3</text>
<rect x="421.5" y="111.5" width="176" height="35" rx="5" fill="#fcf9ff" stroke="#747070" stroke-width="1.2"/>
<rect x="432.5" y="114.5" width="8" height="8" fill="none" stroke="#3030f0" stroke-width="1"/>
<circle cx="436.7" cy="129.7" r="4" fill="none" stroke="#3030f0" stroke-width="1"/>
<circle cx="448.7" cy="118.5" r="5.2" fill="#18a8f0"/>
<text x="448.7" y="121.7" font-size="9.5" fill="#fff" letter-spacing="0" font-weight="bold" text-anchor="middle" >a</text>
<circle cx="448.7" cy="129.7" r="5.2" fill="#18a8f0"/>
<text x="448.7" y="132.9" font-size="9.5" fill="#fff" letter-spacing="0" font-weight="bold" text-anchor="middle" >b</text>
<text x="464" y="121.2" font-size="9" fill="#2828e8" letter-spacing="0.8" font-weight="bold" text-anchor="start" >&#8722;919.0ms</text>
<text x="464" y="132.6" font-size="9" fill="#2828e8" letter-spacing="0.8" font-weight="bold" text-anchor="start" >&#8722;584.0ms</text>
<text x="462.8" y="143.4" font-size="9" fill="#2828e8" letter-spacing="0.8" font-weight="bold" text-anchor="start" >&#916;335.0ms</text>
<text x="546.2" y="121.2" font-size="9" fill="#2828e8" letter-spacing="0.8" font-weight="bold" text-anchor="start" >73.60 A</text>
<text x="546.2" y="132.6" font-size="9" fill="#2828e8" letter-spacing="0.8" font-weight="bold" text-anchor="start" >55.60 A</text>
<text x="541.6" y="143.4" font-size="9" fill="#2828e8" letter-spacing="1.1" font-weight="bold" text-anchor="start" >&#916;18.00 A</text>
<rect x="12" y="382.3" width="325" height="11.5" rx="4" fill="#fcf9ff" stroke="#6c6454" stroke-width="1"/>
<rect x="15" y="384" width="15" height="9" rx="4.5" fill="#0606fc"/>
<text x="22.5" y="391.6" font-size="8.5" fill="#fff" letter-spacing="0" font-weight="bold" text-anchor="middle" >1</text>
<text x="40.1" y="391.5" font-size="9" fill="#2020e8" letter-spacing="0.9" font-weight="bold" text-anchor="start" >20.0 A</text>
<rect x="178" y="383.8" width="15.5" height="9.2" rx="4.6" fill="#48f048"/>
<text x="185.8" y="391.5" font-size="9.5" fill="#fff" letter-spacing="0" font-weight="bold" text-anchor="middle" >3</text>
<text x="203" y="391.5" font-size="9" fill="#48e848" letter-spacing="0.7" font-weight="bold" text-anchor="start" >250 V</text>
<rect x="12" y="394.6" width="325" height="22.9" rx="5" fill="#fcf9ff" stroke="#4c463c" stroke-width="1"/>
<rect x="15" y="407.5" width="15" height="9" rx="4.5" fill="#0606fc"/>
<text x="22.5" y="415.1" font-size="8.5" fill="#fff" letter-spacing="0" font-weight="bold" text-anchor="middle" >1</text>
<text x="32.5" y="414.5" font-size="9.5" fill="#2020e8" letter-spacing="0.3" font-weight="bold" text-anchor="start" >Frequency</text>
<text x="91.4" y="404.2" font-size="9" fill="#000" letter-spacing="0.8" font-weight="bold" text-anchor="start" >Value</text>
<text x="91.6" y="415" font-size="9" fill="#2020e8" letter-spacing="0.9" font-weight="bold" text-anchor="start" >38.33 Hz</text>
<text x="143.4" y="404.2" font-size="9" fill="#000" letter-spacing="0.8" font-weight="bold" text-anchor="start" >Mean</text>
<text x="143.6" y="415" font-size="9" fill="#2020e8" letter-spacing="0.9" font-weight="bold" text-anchor="start" >38.33</text>
<text x="191.9" y="404.2" font-size="9" fill="#000" letter-spacing="0.8" font-weight="bold" text-anchor="start" >Min</text>
<text x="192.1" y="415" font-size="9" fill="#2020e8" letter-spacing="0.9" font-weight="bold" text-anchor="start" >38.33</text>
<text x="240" y="404.2" font-size="9" fill="#000" letter-spacing="0.8" font-weight="bold" text-anchor="start" >Max</text>
<text x="240.2" y="415" font-size="9" fill="#2020e8" letter-spacing="0.9" font-weight="bold" text-anchor="start" >38.33</text>
<text x="287.6" y="404.2" font-size="9" fill="#000" letter-spacing="0.8" font-weight="bold" text-anchor="start" >Std Dev</text>
<text x="287.8" y="415" font-size="9" fill="#2020e8" letter-spacing="0.9" font-weight="bold" text-anchor="start" >0.000</text>
<rect x="340.5" y="392.5" width="87" height="22" rx="5" fill="#fcf9ff" stroke="#6c6454" stroke-width="1"/>
<text x="343.2" y="401.8" font-size="9" fill="#000" letter-spacing="0.8" font-weight="bold" text-anchor="start" >Z 100ms</text>
<rect x="431.5" y="392.5" width="62" height="22" rx="5" fill="#fcf9ff" stroke="#6c6454" stroke-width="1"/>
<text x="435.2" y="401.8" font-size="9" fill="#000" letter-spacing="1.2" font-weight="bold" text-anchor="start" >1.25MS/s</text>
<text x="435.2" y="411" font-size="9" fill="#000" letter-spacing="0.8" font-weight="bold" text-anchor="start" >5M points</text>
<rect x="498.5" y="392.5" width="100" height="22" rx="5" fill="#fcf9ff" stroke="#6c6454" stroke-width="1"/>
<rect x="517" y="394.5" width="15" height="9" rx="4.5" fill="#f040f0"/>
<text x="524.5" y="402.1" font-size="8.5" fill="#fff" letter-spacing="0" font-weight="bold" text-anchor="middle" >4</text>
<path d="M539.3 401.3H541.3C543.5 401.3 542.5 395.6 544.8 395.6H546.8" fill="none" stroke="#000" stroke-width="1.5"/>
<text x="565.2" y="401.8" font-size="9" fill="#000" letter-spacing="0.9" font-weight="bold" text-anchor="start" >0.00 V</text>
<path d="M-1 418.3H5.8A4 4 0 0 1 9.8 422.3V451H-1Z" fill="#0606fc" stroke="#e4d890" stroke-width="0.8"/>
<text x="4.9" y="438.2" font-size="9" fill="#fff" letter-spacing="0" font-weight="normal" text-anchor="middle" stroke="#fff" stroke-width="0.3">1</text>
<rect x="77" y="419" width="4.5" height="31" fill="#ddd39c"/>
<rect x="146.5" y="419" width="3.5" height="31" fill="#ddd39c"/>
<rect x="215.4" y="419" width="3.8" height="31" fill="#ddd39c"/>
<rect x="285" y="419" width="3.5" height="31" fill="#ddd39c"/>
<rect x="12.8" y="419" width="64.4" height="30.8" rx="4" fill="#ecdcbc"/>
<rect x="12.5" y="418.5" width="64" height="29.8" rx="4" fill="#ad7719" stroke="#8e5e16" stroke-width="1"/>
<rect x="82.3" y="419" width="64.4" height="30.8" rx="4" fill="#ecdcbc"/>
<rect x="82" y="418.5" width="64" height="29.8" rx="4" fill="#ad7719" stroke="#8e5e16" stroke-width="1"/>
<rect x="150.8" y="419" width="64.8" height="30.8" rx="4" fill="#ecdcbc"/>
<rect x="150.5" y="418.5" width="64.4" height="29.8" rx="4" fill="#ad7719" stroke="#8e5e16" stroke-width="1"/>
<rect x="220" y="419" width="65.2" height="30.8" rx="4" fill="#ecdcbc"/>
<rect x="219.7" y="418.5" width="64.8" height="29.8" rx="4" fill="#ad7719" stroke="#8e5e16" stroke-width="1"/>
<rect x="289.3" y="419" width="64.9" height="30.8" rx="4" fill="#ecdcbc"/>
<rect x="289" y="418.5" width="64.5" height="29.8" rx="4" fill="#ad7719" stroke="#8e5e16" stroke-width="1"/>
<rect x="427.8" y="419" width="65.4" height="30.8" rx="4" fill="#ecdcbc"/>
<rect x="427.5" y="418.5" width="65" height="29.8" rx="4" fill="#ad7719" stroke="#8e5e16" stroke-width="1"/>
<text x="24.2" y="428.8" font-size="9" fill="#f4ecd8" letter-spacing="0.7" font-weight="bold" text-anchor="start" >Coupling</text>
<rect x="19.5" y="434.7" width="17" height="15" rx="2.5" fill="#3a3024"/>
<text x="21" y="445.2" font-size="9" fill="#f4ecd8" letter-spacing="0.5" font-weight="bold" text-anchor="start" >DC</text>
<text x="55.5" y="445.2" font-size="9" fill="#f4ecd8" letter-spacing="0.5" font-weight="bold" text-anchor="start" >AC</text>
<text x="85.6" y="428.8" font-size="9" fill="#f4ecd8" letter-spacing="0.8" font-weight="bold" text-anchor="start" >Termination</text>
<rect x="84.2" y="434.7" width="26.6" height="15" rx="2.5" fill="#3a3024"/>
<text x="86" y="445.2" font-size="9" fill="#f4ecd8" letter-spacing="0.8" font-weight="bold" text-anchor="start" >1M&#937;</text>
<text x="120.8" y="445.2" font-size="9" fill="#f4ecd8" letter-spacing="1.2" font-weight="bold" text-anchor="start" >50&#937;</text>
<text x="169" y="428.8" font-size="9" fill="#f4ecd8" letter-spacing="0.7" font-weight="bold" text-anchor="start" >Invert</text>
<text x="159" y="445.2" font-size="9.5" fill="#f4ecd8" letter-spacing="1.2" font-weight="bold" text-anchor="start" >On</text>
<rect x="190" y="434.7" width="19" height="15" rx="2.5" fill="#3a3024"/>
<text x="191.5" y="445.2" font-size="9" fill="#f4ecd8" letter-spacing="0.5" font-weight="bold" text-anchor="start" >Off</text>
<text x="227.2" y="431.3" font-size="9" fill="#f4ecd8" letter-spacing="0.7" font-weight="bold" text-anchor="start" >Bandwidth</text>
<rect x="243.8" y="434.5" width="17.5" height="8.5" fill="#2a2418"/>
<text x="244.5" y="442.3" font-size="9" fill="#f4ecd8" letter-spacing="0.4" font-weight="bold" text-anchor="start" >Full</text>
<rect x="301" y="428.8" width="15.2" height="9" rx="4.5" fill="#0606fc"/>
<text x="308.6" y="436.4" font-size="8.5" fill="#fff" letter-spacing="0" font-weight="bold" text-anchor="middle" >1</text>
<text x="319.4" y="437" font-size="9" fill="#f4ecd8" letter-spacing="0.2" font-weight="bold" text-anchor="start" >Label</text>
<path d="M453 432.5L460 426L467 432.5Z" fill="#221a10"/>
<text x="449" y="441.2" font-size="9" fill="#f4ecd8" letter-spacing="0.5" font-weight="bold" text-anchor="start" >More</text>
<rect x="532.5" y="427.5" width="65" height="21" rx="5" fill="#fcf9ff" stroke="#6c6454" stroke-width="1"/>
<text x="535.6" y="437" font-size="9" fill="#000" letter-spacing="0.8" font-weight="bold" text-anchor="start" >30 Nov 2024</text>
<text x="536.2" y="445.2" font-size="9" fill="#000" letter-spacing="0.9" font-weight="bold" text-anchor="start" >17:09:11</text>
</svg></body></html>
